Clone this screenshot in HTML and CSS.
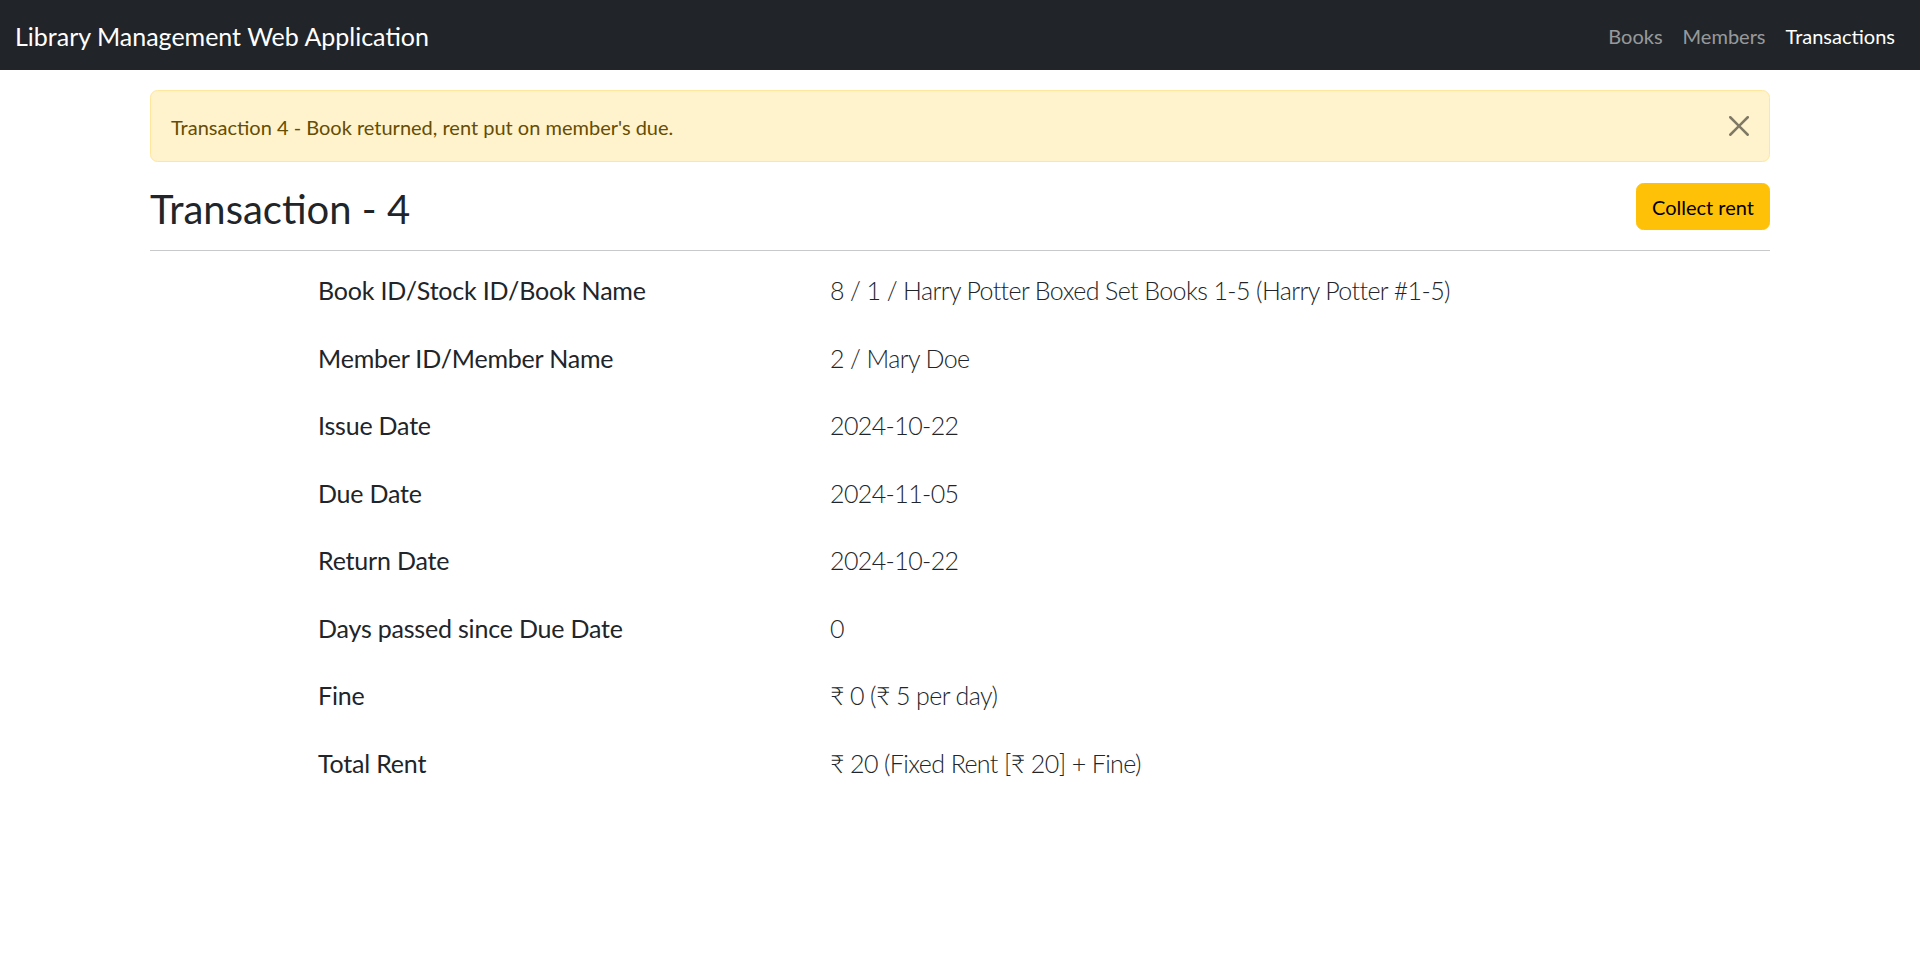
FILE: index.html
```html
<!DOCTYPE html>
<html lang="en">
<head>
<meta charset="utf-8">
<title>Transaction - 4</title>
<link rel="stylesheet" href="styles.css">
</head>
<body>
<nav class="navbar">
  <a class="brand" href="#">Library Management Web Application</a>
  <ul class="nav">
    <li><a class="nav-link" href="#">Books</a></li>
    <li><a class="nav-link" href="#">Members</a></li>
    <li><a class="nav-link active" href="#">Transactions</a></li>
  </ul>
</nav>
<main class="container">
  <div class="alert">
    <span>Transaction 4 - Book returned, rent put on member's due.</span>
    <button class="btn-close" type="button" aria-label="Close">
      <svg viewBox="0 0 16 16" width="20" height="20"><path fill="#000" d="M.293.293a1 1 0 0 1 1.414 0L8 6.586 14.293.293a1 1 0 1 1 1.414 1.414L9.414 8l6.293 6.293a1 1 0 0 1-1.414 1.414L8 9.414l-6.293 6.293a1 1 0 0 1-1.414-1.414L6.586 8 .293 1.707a1 1 0 0 1 0-1.414z"/></svg>
    </button>
  </div>
  <div class="page-header">
    <h2 class="title">Transaction - 4</h2>
    <button class="btn-warning" type="button">Collect rent</button>
  </div>
  <div class="details">
    <div class="detail-row"><div class="label">Book ID/Stock ID/Book Name</div><div class="value">8 / 1 / Harry Potter Boxed Set Books 1-5 (Harry Potter #1-5)</div></div>
    <div class="detail-row"><div class="label">Member ID/Member Name</div><div class="value">2 / Mary Doe</div></div>
    <div class="detail-row"><div class="label">Issue Date</div><div class="value">2024-10-22</div></div>
    <div class="detail-row"><div class="label">Due Date</div><div class="value">2024-11-05</div></div>
    <div class="detail-row"><div class="label">Return Date</div><div class="value">2024-10-22</div></div>
    <div class="detail-row"><div class="label">Days passed since Due Date</div><div class="value">0</div></div>
    <div class="detail-row"><div class="label">Fine</div><div class="value">₹ 0 (₹ 5 per day)</div></div>
    <div class="detail-row"><div class="label">Total Rent</div><div class="value">₹ 20 (Fixed Rent [₹ 20] + Fine)</div></div>
  </div>
</main>
</body>
</html>
```
FILE: styles.css
```css
* { box-sizing: border-box; }
html, body { margin: 0; padding: 0; }
body {
  font-family: Lato, "Noto Sans", "DejaVu Sans", sans-serif;
  font-size: 20px;
  line-height: 1.5;
  color: #212529;
  background: #fff;
}
a { text-decoration: none; }

.navbar {
  background: #212529;
  height: 70px;
  padding: 10px 15px;
  display: flex;
  align-items: center;
  justify-content: space-between;
}
.brand {
  color: #fff;
  font-size: 25px;
  line-height: 37.5px;
  padding: 8px 0 4.5px;
}
.nav {
  list-style: none;
  margin: 0;
  padding: 0;
  display: flex;
}
.nav-link {
  display: block;
  padding: 11px 10px 9px;
  font-size: 20px;
  line-height: 30px;
  color: rgba(255, 255, 255, 0.55);
}
.nav-link.active { color: #fff; }

.container {
  width: 1650px;
  margin: 0 auto;
  padding: 0 15px;
}

.alert {
  position: relative;
  margin-top: 20px;
  margin-bottom: 20px;
  padding: 21px 60px 19px 20px;
  background: #fff3cd;
  border: 1px solid #ffe69c;
  border-radius: 7.5px;
  color: #664d03;
  font-size: 20px;
  line-height: 30px;
}
.btn-close {
  position: absolute;
  top: 0;
  right: 0;
  padding: 25px 20px;
  border: 0;
  background: transparent;
  opacity: 0.5;
  line-height: 0;
  cursor: pointer;
}
.btn-close svg { display: block; }

.page-header {
  display: flex;
  justify-content: space-between;
  align-items: flex-start;
  padding-bottom: 10px;
  margin-bottom: 20px;
  border-bottom: 1px solid #c8c9ca;
}
.title {
  margin: 0 0 7px;
  padding-top: 3px;
  font-size: 40px;
  line-height: 48px;
  font-weight: 400;
}
.btn-warning {
  margin-top: 1px;
  font-family: inherit;
  font-size: 20px;
  line-height: 30px;
  padding: 7.5px 15px;
  color: #000;
  background: #ffc107;
  border: 1px solid #ffc107;
  border-radius: 7.5px;
}

.details {
  padding-left: 168px;
  padding-top: 1px;
}
.detail-row {
  display: grid;
  grid-template-columns: 512px 1fr;
  font-size: 25px;
  line-height: 37.5px;
  margin-bottom: 30px;
}
.label { font-weight: 400; letter-spacing: -0.2px; }
.value { font-weight: 300; letter-spacing: -0.6px; }
```
